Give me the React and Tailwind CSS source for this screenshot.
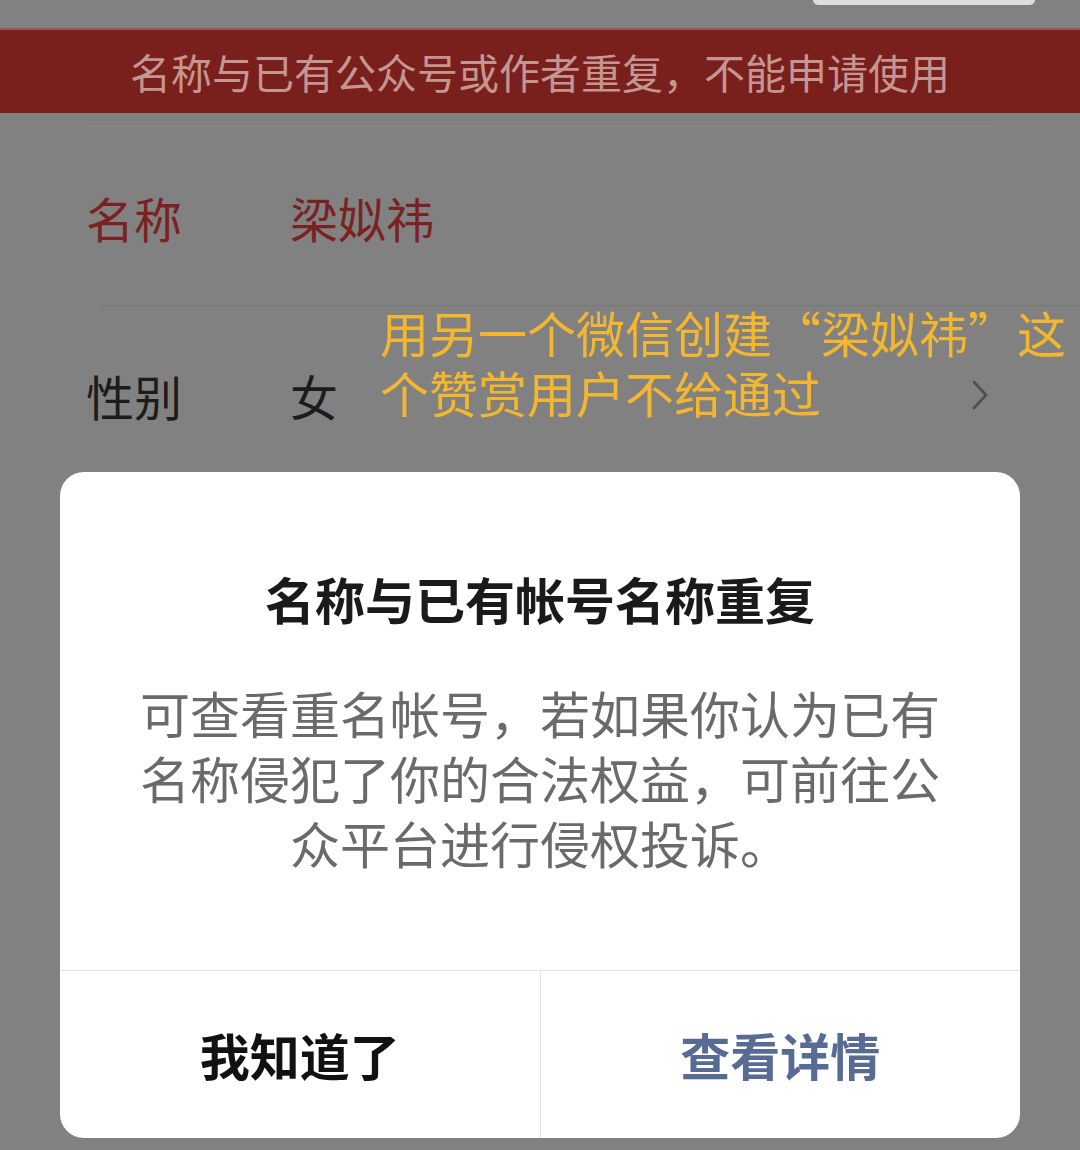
const cjk = { fontFamily: '"Noto Sans CJK SC", "Noto Sans", sans-serif' };

function ChevronRight() {
    return (
        <svg width="20" height="32" viewBox="0 0 20 32" fill="none">
            <path d="M4 3 L16 16 L4 29" stroke="#4f4f4f" strokeWidth="2.6" strokeLinecap="round" strokeLinejoin="round" />
        </svg>
    );
}

function InfoRows() {
    return (
        <div>
            {/* faint line under banner */}
            <div className="mt-[13px] ml-[88px] w-[907px] h-px bg-[#8b8b8b]" />

            <div className="h-[178px] pt-[66px] pl-[86px] flex text-[48px] leading-[48px] text-[#7a2222]">
                <span className="w-[204px]">名称</span>
                <span>梁姒祎</span>
            </div>

            <div className="ml-[100px] h-px bg-[#777777]" />

            <div className="relative h-[166px] pl-[86px] flex items-start text-[48px] leading-[48px] text-[#1c1c1c]">
                <span className="w-[204px] mt-[65px]">性别</span>
                <span className="mt-[65px]">女</span>
                <span className="ml-auto mr-[90px] mt-[73px]">
                    <ChevronRight />
                </span>

                {/* annotation laid over the row */}
                <div className="absolute left-[380px] top-[-4px] text-[49px] leading-[60px] text-[#f2b62f] whitespace-nowrap">
                    <div>用另一个微信创建“梁姒祎”这</div>
                    <div>个赞赏用户不给通过</div>
                </div>
            </div>
        </div>
    );
}

function Dialog() {
    return (
        <div className="mx-[60px] h-[666px] rounded-[24px] bg-white flex flex-col overflow-hidden">
            <div className="flex-1 flex flex-col items-center">
                <div className="pt-[101px] text-[50px] leading-[50px] font-bold text-[#1a1a1a] whitespace-nowrap">
                    名称与已有帐号名称重复
                </div>
                <div className="mt-[57px] text-[50px] leading-[65px] text-[#6a6a6a] text-center whitespace-nowrap">
                    <div>可查看重名帐号，若如果你认为已有</div>
                    <div>名称侵犯了你的合法权益，可前往公</div>
                    <div>众平台进行侵权投诉。</div>
                </div>
            </div>
            <div className="h-[168px] border-t border-[#e3e3e3] flex">
                <button className="flex-1 flex items-center justify-center text-[50px] font-bold text-[#111111]">
                    我知道了
                </button>
                <div className="w-px bg-[#e3e3e3]" />
                <button className="flex-1 flex items-center justify-center text-[50px] font-bold text-[#576b95]">
                    查看详情
                </button>
            </div>
        </div>
    );
}

export default function App() {
    return (
        <div className="w-[1080px] h-[1150px] bg-[#818181] overflow-hidden" style={cjk}>
            <div className="h-[28px] flex justify-end">
                <div className="w-[222px] h-[5px] mr-[45px] rounded-b-full bg-[#dcdcdc]" />
            </div>

            <div className="h-[85px] bg-[#79201d] border-t-2 border-[#9a5654] flex items-center justify-center text-[41px] text-[#c59592] whitespace-nowrap">
                名称与已有公众号或作者重复，不能申请使用
            </div>

            <InfoRows />

            <Dialog />
        </div>
    );
}
